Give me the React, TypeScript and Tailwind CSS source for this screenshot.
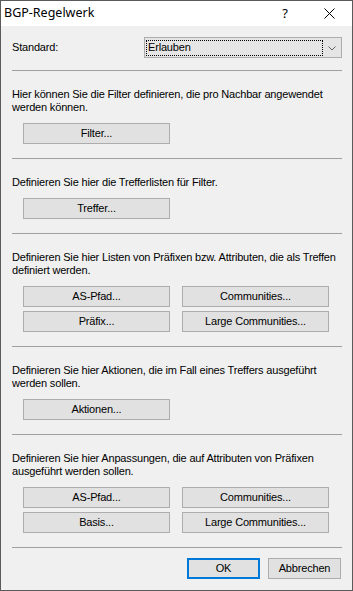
import React from 'react';

function Btn({ label, className = '' }: { label: string; className?: string }) {
  return (
    <div
      className={`flex h-[21px] w-[147px] items-center justify-center border border-[#adadad] bg-[#e1e1e1] leading-none ${className}`}
    >
      {label}
    </div>
  );
}

function Sep({ className = '' }: { className?: string }) {
  return <div className={`h-px bg-[#a0a0a0] ${className}`} />;
}

function Section({ text, children }: { text: React.ReactNode; children: React.ReactNode }) {
  return (
    <>
      <p className="mt-[17px] whitespace-nowrap leading-[13px]">{text}</p>
      <div className="mt-[9px] flex flex-col gap-[4px] pl-[11px]">{children}</div>
      <Sep className="mt-[14px]" />
    </>
  );
}

export default function App() {
  return (
    <div className="flex h-[591px] w-[353px] flex-col overflow-hidden border border-[#5a5a5a] bg-[#f0f0f0] font-['Liberation_Sans',Arial,sans-serif] text-[11px] tracking-[-0.18px] text-black">
      {/* Titelleiste */}
      <div className="flex h-[25px] shrink-0 items-center bg-white pl-[3px] font-['Noto_Sans',sans-serif] text-[12.5px] tracking-normal">
        <span>BGP-Regelwerk</span>
        <span className="ml-auto mr-[36px] text-[13px]">?</span>
        <svg width="11" height="11" viewBox="0 0 11 11" className="mr-[17px]">
          <path d="M0.5 0.5 L10.5 10.5 M10.5 0.5 L0.5 10.5" stroke="#000" strokeWidth="1" />
        </svg>
      </div>

      <div className="flex flex-col pl-[11px] pr-[10px] pt-[11px]">
        <div className="flex h-[21px] items-center">
          <span>Standard:</span>
          <div className="relative ml-auto flex h-[21px] w-[198px] items-center border border-[#adadad] bg-[#e5e5e5]">
            <div className="ml-[1px] flex h-[16px] w-[177px] items-center border border-dotted border-black pl-px leading-none">
              Erlauben
            </div>
            <svg width="8" height="5" viewBox="0 0 8 5" className="absolute right-[5px] top-[8px]">
              <path d="M0.5 0.5 L4 4 L7.5 0.5" stroke="#606060" strokeWidth="1" fill="none" />
            </svg>
          </div>
        </div>

        <Sep className="mt-[12px]" />

        <Section
          text={
            <>
              Hier können Sie die Filter definieren, die pro Nachbar angewendet
              <br />
              werden können.
            </>
          }
        >
          <Btn label="Filter..." />
        </Section>

        <Section text="Definieren Sie hier die Trefferlisten für Filter.">
          <Btn label="Treffer..." />
        </Section>

        <Section
          text={
            <>
              Definieren Sie hier Listen von Präfixen bzw. Attributen, die als Treffen
              <br />
              definiert werden.
            </>
          }
        >
          <div className="flex gap-[12px]">
            <Btn label="AS-Pfad..." />
            <Btn label="Communities..." />
          </div>
          <div className="flex gap-[12px]">
            <Btn label="Präfix..." />
            <Btn label="Large Communities..." />
          </div>
        </Section>

        <Section
          text={
            <>
              Definieren Sie hier Aktionen, die im Fall eines Treffers ausgeführt
              <br />
              werden sollen.
            </>
          }
        >
          <Btn label="Aktionen..." />
        </Section>

        <Section
          text={
            <>
              Definieren Sie hier Anpassungen, die auf Attributen von Präfixen
              <br />
              ausgeführt werden sollen.
            </>
          }
        >
          <div className="flex gap-[12px]">
            <Btn label="AS-Pfad..." />
            <Btn label="Communities..." />
          </div>
          <div className="flex gap-[12px]">
            <Btn label="Basis..." />
            <Btn label="Large Communities..." />
          </div>
        </Section>

        <div className="mt-[10px] flex justify-end gap-[8px] pr-px">
          <div className="flex h-[21px] w-[73px] items-center justify-center border-2 border-[#0078d7] bg-[#e1e1e1] leading-none">
            OK
          </div>
          <div className="flex h-[21px] w-[73px] items-center justify-center border border-[#adadad] bg-[#e1e1e1] leading-none">
            Abbrechen
          </div>
        </div>
      </div>
    </div>
  );
}
